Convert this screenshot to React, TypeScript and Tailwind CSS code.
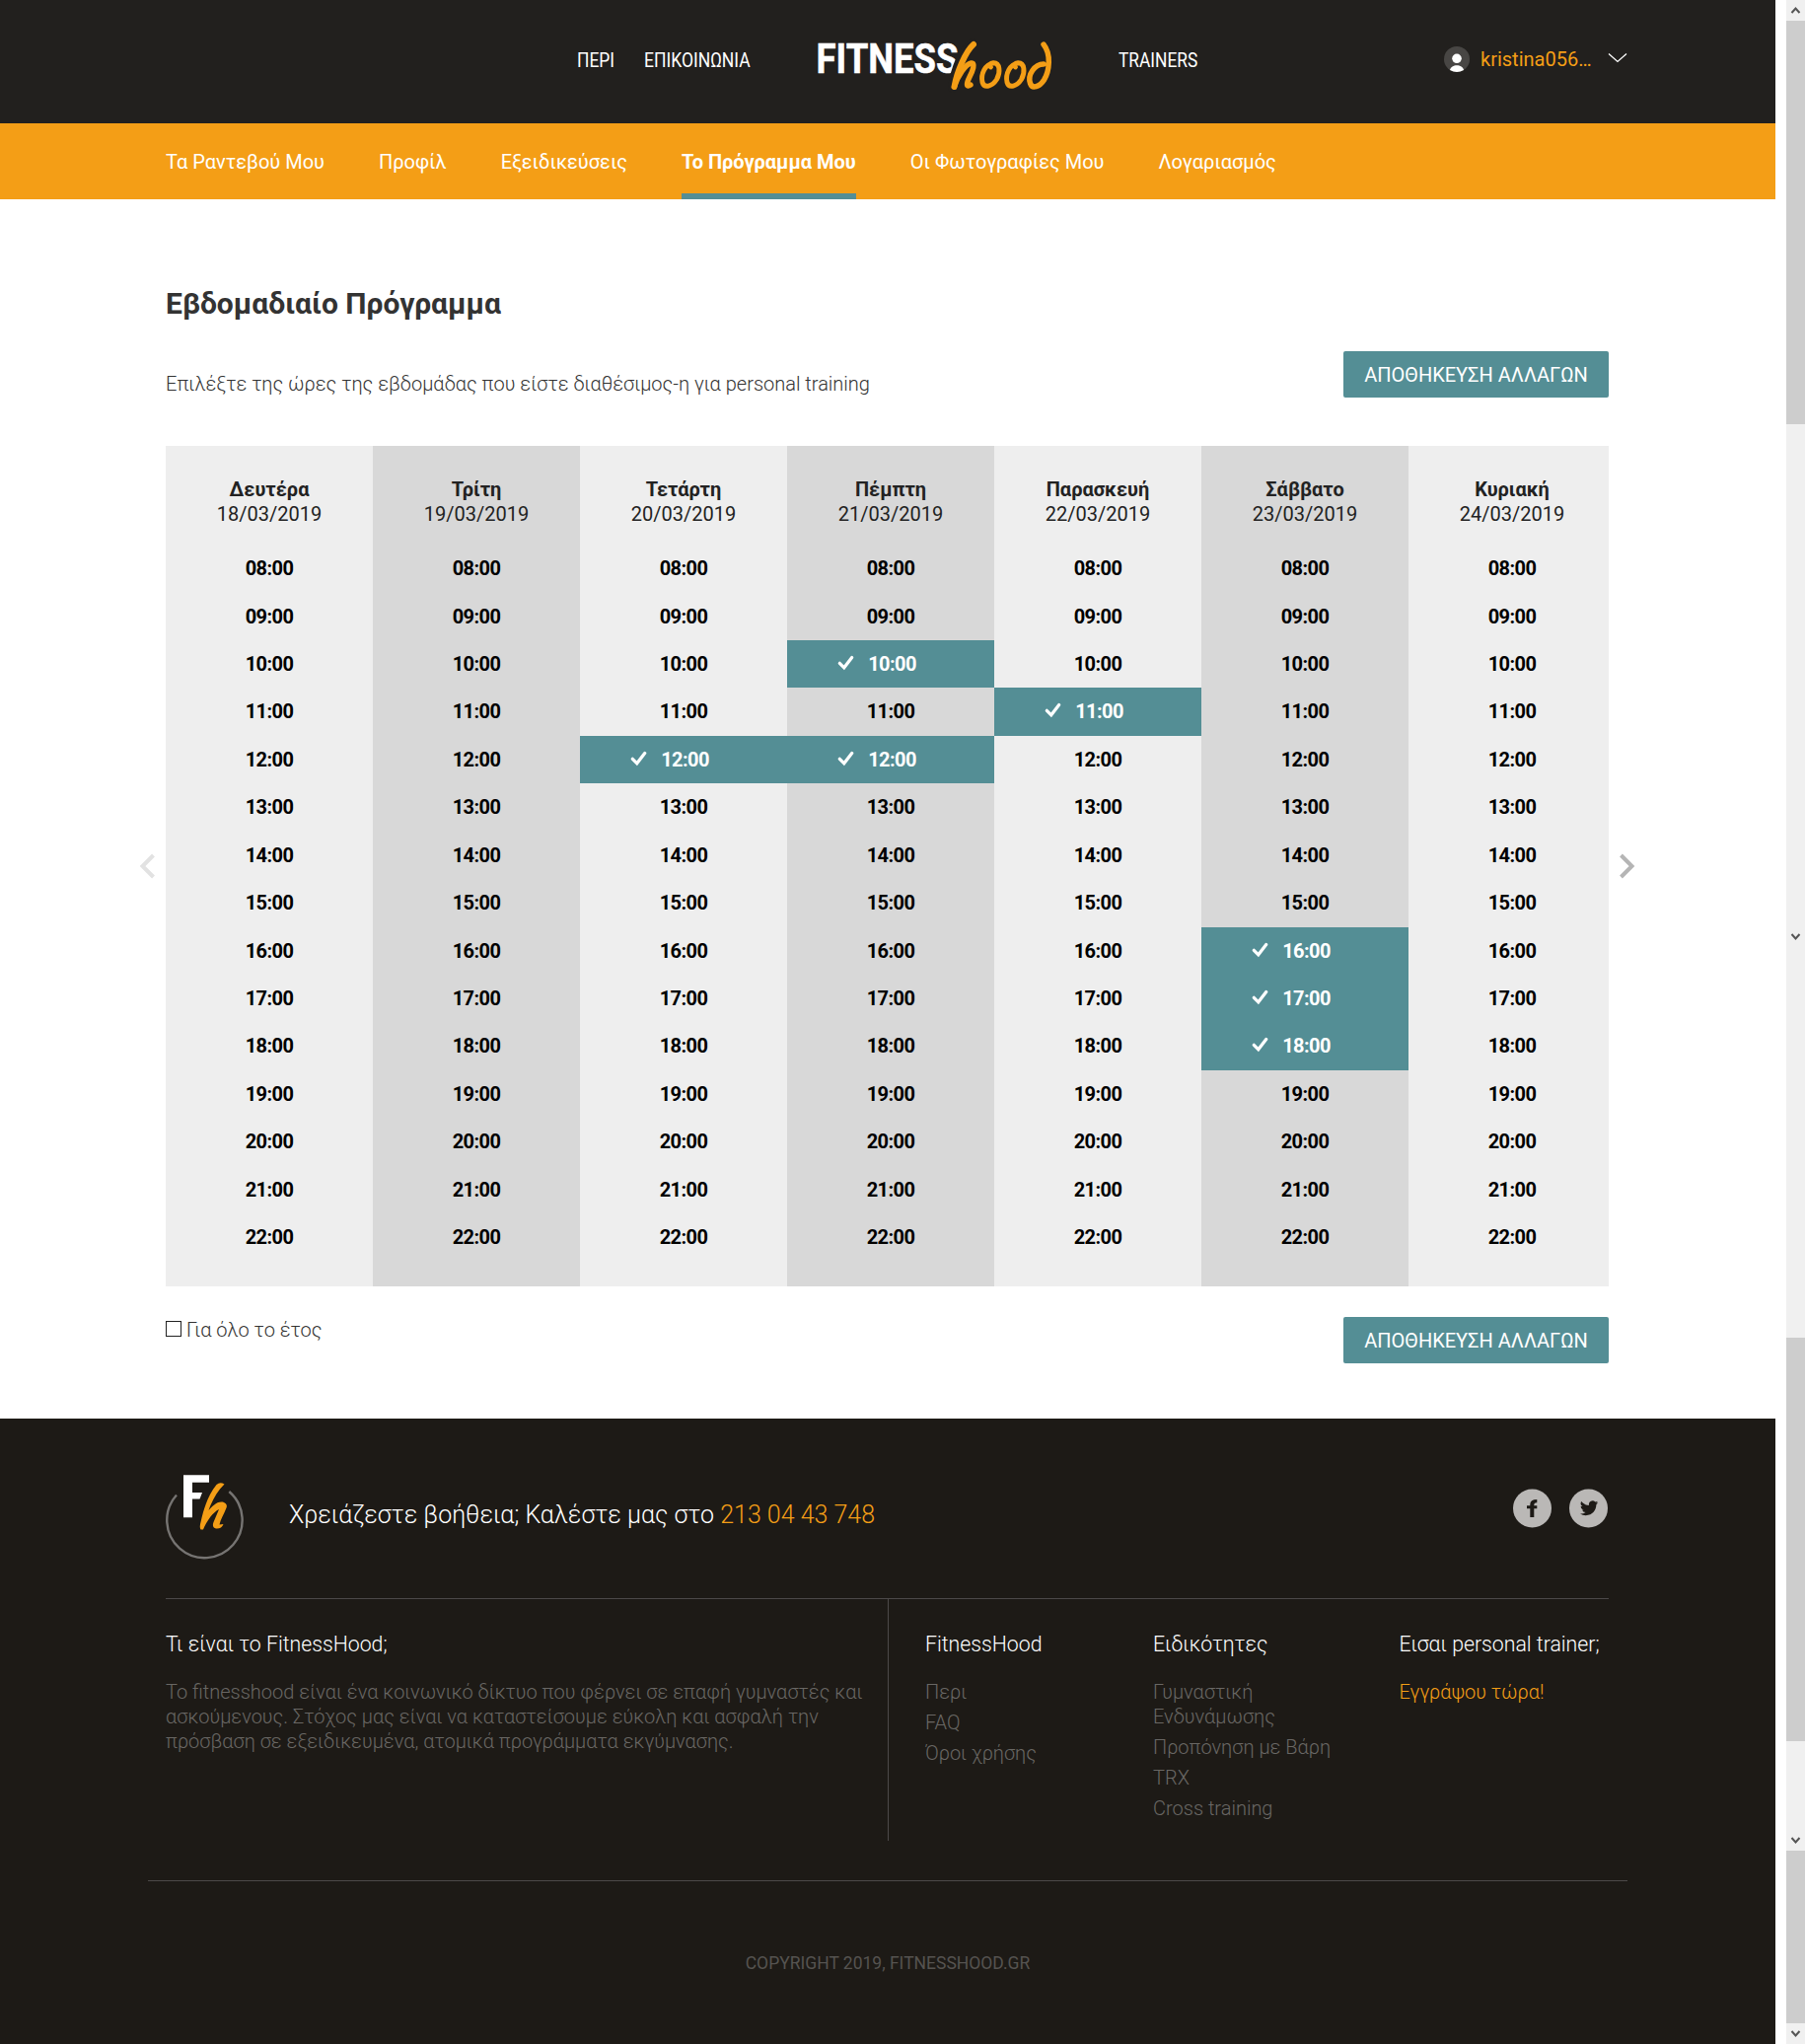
import React from "react";

const HOURS = Array.from({ length: 15 }, (_, i) => `${String(i + 8).padStart(2, "0")}:00`);

const DAYS = [
  { name: "Δευτέρα", date: "18/03/2019", picked: [] as string[] },
  { name: "Τρίτη", date: "19/03/2019", picked: [] },
  { name: "Τετάρτη", date: "20/03/2019", picked: ["12:00"] },
  { name: "Πέμπτη", date: "21/03/2019", picked: ["10:00", "12:00"] },
  { name: "Παρασκευή", date: "22/03/2019", picked: ["11:00"] },
  { name: "Σάββατο", date: "23/03/2019", picked: ["16:00", "17:00", "18:00"] },
  { name: "Κυριακή", date: "24/03/2019", picked: [] },
];

const TABS = ["Τα Ραντεβού Μου", "Προφίλ", "Εξειδικεύσεις", "Το Πρόγραμμα Μου", "Οι Φωτογραφίες Μου", "Λογαριασμός"];

function Logo() {
  return (
    <svg width="240" height="56" viewBox="0 0 240 56" className="block overflow-visible">
      <text x="-0.500" y="34.500" fontFamily="Roboto" fontWeight="700" fontSize="42" fill="#fff" stroke="#fff" strokeWidth="0.500" textLength="144" lengthAdjust="spacingAndGlyphs">FITNESS</text>
      <path d="M158 5C148 14 141 30 138 50" fill="none" stroke="#22201e" strokeWidth="10" strokeLinecap="round" />
      <g fill="none" stroke="#f49e16" strokeLinecap="round" strokeLinejoin="round">
        <path d="M159 6C151 13 142 34 139.500 49" strokeWidth="6" />
        <path d="M139.500 49C143 38 151 26 156.500 25C161.500 24.500 158 33 155 39C151.500 46 151.500 50 156 47" strokeWidth="5.400" />
        <path d="M179 24.800C171 26 166 36 168 44.500C170 51 178 48.500 182.500 41.500C186.500 34.500 186 24.500 179 24.800C176 25 175 27 176.500 29" strokeWidth="4.900" />
        <path d="M204 24.800C196 26 191 36 193 44.500C195 51 203 48.500 207.500 41.500C211.500 34.500 211 24.500 204 24.800C201 25 200 27 201.500 29" strokeWidth="4.900" />
        <path d="M230 26C221 26 213.500 37 216.500 45.500C218.500 51.500 226 49 230.500 42C236 33 238 16 230 6" strokeWidth="5.400" />
      </g>
    </svg>
  );
}

function FooterLogo() {
  return (
    <svg width="80" height="88" viewBox="0 0 80 88" className="block">
      <path d="M11 21.500A38.200 38.200 0 1 0 64.300 18" fill="none" stroke="#767472" strokeWidth="2.400" />
      <path d="M18 1.300H44V8.700H27V19H37L34.500 25.500H27V44.300H18Z" fill="#fff" />
      <path d="M51.500 11Q55 8 59.500 10.500C52 18 47 27 43.500 37C49 30.500 54 27.500 59 29Q63 31 61.500 34.500C59 41 55.500 46 54.500 51.500L58.500 51Q56.500 56 51 55.500Q46.500 54.500 48.500 49L54 36C48 39 42 47 38 56.500L35.500 56.500Q34 54 35.500 49C39 33 44 20 51.500 11Z" fill="#f49e16" />
    </svg>
  );
}

function Check() {
  return (
    <svg width="17" height="16" viewBox="0 0 17 16" className="absolute left-[51px] top-[15px]">
      <path d="M2.300 8.300L6.800 12.800L14.700 2.500" fill="none" stroke="#fff" strokeWidth="3.200" strokeLinecap="round" />
    </svg>
  );
}

function SaveButton() {
  return (
    <button className="h-[47px] w-[269px] rounded-[2px] bg-[#548e95] text-[20px] leading-[47px] text-white">
      <span className="block whitespace-nowrap pt-px">ΑΠΟΘΗΚΕΥΣΗ ΑΛΛΑΓΩΝ</span>
    </button>
  );
}

function Arrow({ up = false }: { up?: boolean }) {
  return (
    <svg width="19" height="21" viewBox="0 0 19 21" className="block shrink-0">
      <path d={up ? "M5.500 13L9.500 8.500L13.500 13" : "M5.500 8L9.500 12.500L13.500 8"} fill="none" stroke="#555" strokeWidth="2" />
    </svg>
  );
}

function Scrollbar() {
  return (
    <div className="flex h-[2072px] w-[19px] flex-col bg-[#f0f0f0]">
      <Arrow up />
      <div className="h-[409px] bg-[#cdcdcd]" />
      <div className="flex h-[926px] flex-col pt-[509px]"><Arrow /></div>
      <div className="h-[409px] bg-[#cdcdcd]" />
      <div className="flex h-[111px] flex-col justify-end"><Arrow /></div>
      <div className="h-[175px] bg-[#cdcdcd]" />
      <Arrow />
    </div>
  );
}

function Header() {
  return (
    <header className="flex h-[125px] items-start bg-[#22201e] pl-[585px] text-white">
      <nav className="flex w-[243px] gap-[30px] pt-[48px] text-[20px] leading-[26px]">
        <a className="w-[38px]"><span className="inline-block origin-left scale-x-[.87] whitespace-nowrap">ΠΕΡΙ</span></a>
        <a><span className="inline-block origin-left scale-x-[.875] whitespace-nowrap">ΕΠΙΚΟΙΝΩΝΙΑ</span></a>
      </nav>
      <div className="w-[306px] pt-[39px]"><Logo /></div>
      <a className="w-[330px] pt-[48px] text-[20px] leading-[26px]"><span className="inline-block origin-left scale-x-[.867]">TRAINERS</span></a>
      <div className="flex pt-[47px]">
        <svg width="26" height="26" viewBox="0 0 26 26" className="block">
          <circle cx="13" cy="13" r="13" fill="#484644" />
          <circle cx="13" cy="12.300" r="4.800" fill="#fff" />
          <path d="M6 24C7 17.500 19 17.500 20 24Q13 28 6 24" fill="#fff" />
        </svg>
        <span className="ml-[11px] w-[129px] text-[20px] leading-[26px] text-[#f49e16]">kristina056…</span>
        <svg width="20" height="12" viewBox="0 0 20 12" className="mt-[6px] block">
          <path d="M1 1.500L10 9.500L19 1.500" fill="none" stroke="#fff" strokeWidth="1.300" />
        </svg>
      </div>
    </header>
  );
}

function Schedule() {
  return (
    <div className="flex h-[852px] w-[1463px] overflow-hidden">
      {DAYS.map((day, i) => (
        <div key={day.name} className={`h-full w-[210px] shrink-0 ${i % 2 ? "bg-[#d8d8d8]" : "bg-[#eee]"}`}>
          <div className="h-[100.140px] pt-[32px] text-center text-[20px] leading-[25px] text-[#222]">
            <div className="font-bold">{day.name}</div>
            <div>{day.date}</div>
          </div>
          {HOURS.map((h) => {
            const on = day.picked.includes(h);
            return (
              <div key={h} className={`relative h-[48.430px] text-center text-[20px] font-bold leading-[48.300px] tracking-[-0.6px] ${on ? "bg-[#548e95] pl-[3px] text-white" : "text-black"}`}>
                {on && <Check />}
                {h}
              </div>
            );
          })}
        </div>
      ))}
    </div>
  );
}

function FooterList({ title, items, className }: { title: string; items: string[]; className: string }) {
  return (
    <div className={className}>
      <h3 className="text-[21.250px] leading-[25px] text-white">{title}</h3>
      <ul className="mt-[24px] flex flex-col gap-[6px] text-[20px] leading-[25px] text-[#696764]">
        {items.map((t) => <li key={t} className="whitespace-pre-line">{t}</li>)}
      </ul>
    </div>
  );
}

export default function App() {
  return (
    <div className="flex h-[2072px] w-[1830px] overflow-hidden bg-white font-[Roboto,sans-serif]">
      <div className="w-[1800px]">
        <Header />
        <nav className="flex h-[77px] gap-[55px] bg-[#f49e16] pl-[168px] text-[20px] leading-[79px] text-white">
          {TABS.map((t) => (
            <a key={t} className={`h-[77px] whitespace-nowrap ${t === "Το Πρόγραμμα Μου" ? "border-b-[6px] border-[#548e95] font-bold" : ""}`}>{t}</a>
          ))}
        </nav>
        <main className="h-[1236px] w-[1631px] pl-[168px] pt-[86px]">
          <h1 className="text-[30px] font-bold leading-[40px] text-[#333]">Εβδομαδιαίο Πρόγραμμα</h1>
          <div className="mt-[28px] flex h-[96px] items-start justify-between">
            <p className="pt-[20px] text-[20px] font-light leading-[26px] text-[#333]">Επιλέξτε της ώρες της εβδομάδας που είστε διαθέσιμος-η για personal training</p>
            <SaveButton />
          </div>
          <div className="relative">
            <Schedule />
            <svg width="18" height="26" viewBox="0 0 18 26" className="absolute -left-[27px] top-[413px]">
              <path d="M14.500 2L3.500 13L14.500 24" fill="none" stroke="#e2e2e2" strokeWidth="4" />
            </svg>
            <svg width="18" height="26" viewBox="0 0 18 26" className="absolute -right-[28px] top-[413px]">
              <path d="M2.500 2L13.500 13L2.500 24" fill="none" stroke="#b5b5b5" strokeWidth="4" />
            </svg>
          </div>
          <div className="mt-[31px] flex items-start justify-between">
            <label className="flex text-[20px] font-light leading-[26px] text-[#333]">
              <span className="mr-[5px] mt-[4px] size-4 border border-[#222]" />Για όλο το έτος
            </label>
            <SaveButton />
          </div>
        </main>
        <footer className="h-[634px] bg-[#1d1a16] font-light">
          <div className="ml-[168px] flex h-[182px] w-[1463px] items-start pt-[56px]">
            <FooterLogo />
            <p className="ml-[45px] pt-[25px] text-[25px] leading-[34px] text-white">
              Χρειάζεστε βοήθεια; Καλέστε μας στο <span className="text-[#f49e16]">213 04 43 748</span>
            </p>
            <div className="ml-auto mr-px flex gap-[18px] pt-[15px]">
              <svg width="39" height="40" viewBox="0 0 39 40"><circle cx="19.500" cy="20" r="19.500" fill="#bab8b6" /><path d="M17.300 29V20.300H14V17.300H17.300V16Q17.300 11 24.300 11V14.200Q21.300 14 21.300 16.200V17.300H24.300V20.300H21.300V29Z" fill="#1d1a16" /></svg>
              <svg width="39" height="40" viewBox="0 0 39 40">
                <circle cx="19.500" cy="20" r="19.500" fill="#bab8b6" />
                <path transform="translate(11 10.700) scale(.76)" d="M23.950 4.570a10 10 0 0 1-2.820.77 4.960 4.960 0 0 0 2.160-2.720c-.95.550-2 .950-3.130 1.180a4.920 4.920 0 0 0-8.380 4.480C7.690 8.090 4.070 6.130 1.640 3.160a4.930 4.930 0 0 0 1.520 6.570 4.900 4.900 0 0 1-2.230-.61v.060a4.920 4.920 0 0 0 3.950 4.820 5 5 0 0 1-2.210.09 4.940 4.940 0 0 0 4.600 3.420A9.870 9.870 0 0 1 0 19.540a14 14 0 0 0 7.550 2.210c9.050 0 14-7.500 14-13.980l-.02-.63a9.940 9.940 0 0 0 2.420-2.570z" fill="#1d1a16" />
              </svg>
            </div>
          </div>
          <div className="ml-[168px] flex h-[246px] w-[1463px] border-t border-[#4c4949]">
            <div className="w-[733px] border-r border-[#4c4949] pt-[33px]">
              <h3 className="text-[21.250px] leading-[25px] text-white">Τι είναι το FitnessHood;</h3>
              <p className="mt-[24px] whitespace-nowrap text-[20px] leading-[25px] text-[#696764]">
                Το fitnesshood είναι ένα κοινωνικό δίκτυο που φέρνει σε επαφή γυμναστές και<br />
                ασκούμενους. Στόχος μας είναι να καταστείσουμε εύκολη και ασφαλή την<br />
                πρόσβαση σε εξειδικευμένα, ατομικά προγράμματα εκγύμνασης.
              </p>
            </div>
            <FooterList className="ml-[37px] w-[231px] pt-[33px]" title="FitnessHood" items={["Περι", "FAQ", "Όροι χρήσης"]} />
            <FooterList className="w-[249.500px] pt-[33px]" title="Ειδικότητες" items={["Γυμναστική\nΕνδυνάμωσης", "Προπόνηση με Βάρη", "TRX", "Cross training"]} />
            <div className="whitespace-nowrap pt-[33px]">
              <h3 className="text-[21.250px] leading-[25px] text-white">Εισαι personal trainer;</h3>
              <p className="mt-[24px] text-[20px] leading-[25px] text-[#f49e16]">Εγγράψου τώρα!</p>
            </div>
          </div>
          <div className="ml-[150px] mt-[40px] w-[1500px] border-t border-[#4c4949] pt-[70px] text-center text-[17.500px] font-normal leading-[26px] text-[#555350]">
            COPYRIGHT 2019, FITNESSHOOD.GR
          </div>
        </footer>
      </div>
      <div className="ml-[11px]"><Scrollbar /></div>
    </div>
  );
}
